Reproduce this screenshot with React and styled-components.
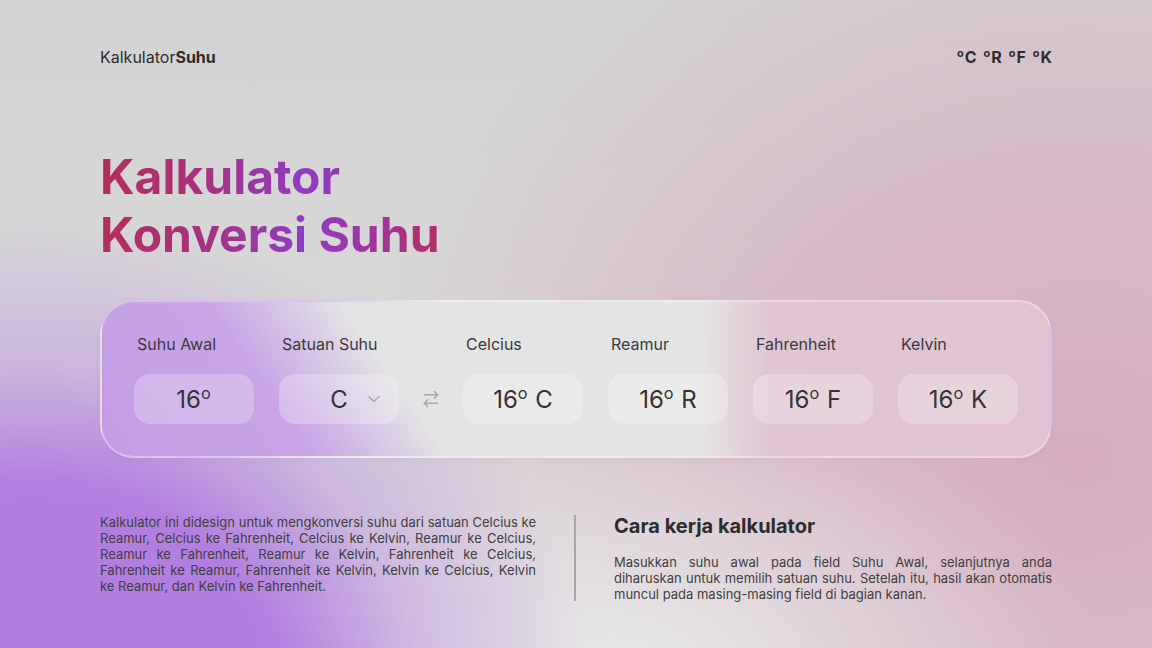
import React from "react";
import styled, { createGlobalStyle } from "styled-components";
import { ChevronDown, ArrowRightLeft } from "lucide-react";

const GlobalStyle = createGlobalStyle`
  * { box-sizing: border-box; }
  html, body {
    margin: 0;
    padding: 0;
    font-family: Inter, "Noto Sans", sans-serif;
    color: #333;
  }
`;

const units = ["C", "R", "F", "K"];

const results = [
  { label: "Celcius", unit: "C" },
  { label: "Reamur", unit: "R" },
  { label: "Fahrenheit", unit: "F" },
  { label: "Kelvin", unit: "K" },
];

const App = () => {
  return (
    <Page>
      <GlobalStyle />
      <Header>
        <Logo>
          Kalkulator<b>Suhu</b>
        </Logo>
        <UnitNav>
          {units.map((u) => (
            <span key={u}>
              <Deg>o</Deg>
              {u}
            </span>
          ))}
        </UnitNav>
      </Header>

      <Title>
        Kalkulator
        <br />
        Konversi Suhu
      </Title>

      <Card>
        <Column>
          <Label>Suhu Awal</Label>
          <Field>
            <span>
              16<Deg>o</Deg>
            </span>
          </Field>
        </Column>
        <Column>
          <Label>Satuan Suhu</Label>
          <Field>
            <span>C</span>
            <SelectIcon>
              <ChevronDown size={20} strokeWidth={1.8} />
            </SelectIcon>
          </Field>
        </Column>
        <SwapSlot>
          <ArrowRightLeft size={20} strokeWidth={1.8} />
        </SwapSlot>
        {results.map((r) => (
          <Column key={r.label}>
            <Label>{r.label}</Label>
            <Field>
              <span>
                16<Deg>o</Deg> {r.unit}
              </span>
            </Field>
          </Column>
        ))}
      </Card>

      <InfoSection>
        <InfoText>
          Kalkulator ini didesign untuk mengkonversi suhu dari satuan Celcius ke
          Reamur, Celcius ke Fahrenheit, Celcius ke Kelvin, Reamur ke Celcius,
          Reamur ke Fahrenheit, Reamur ke Kelvin, Fahrenheit ke Celcius,
          Fahrenheit ke Reamur, Fahrenheit ke Kelvin, Kelvin ke Celcius, Kelvin
          ke Reamur, dan Kelvin ke Fahrenheit.
        </InfoText>
        <Divider />
        <div>
          <InfoTitle>Cara kerja kalkulator</InfoTitle>
          <InfoText>
            Masukkan suhu awal pada field Suhu Awal, selanjutnya anda
            diharuskan untuk memilih satuan suhu. Setelah itu, hasil akan
            otomatis muncul pada masing-masing field di bagian kanan.
          </InfoText>
        </div>
      </InfoSection>
    </Page>
  );
};

export default App;

const Page = styled.div`
  width: 1152px;
  height: 648px;
  overflow: hidden;
  padding: 47px 100px 0;
  background:
    radial-gradient(ellipse 560px 480px at 30px 700px, #b07be0 0%, #b27fe0 45%, rgba(190, 150, 225, 0.5) 70%, rgba(200, 180, 225, 0) 100%),
    radial-gradient(ellipse 480px 260px at 620px 660px, #e7e7e7 0%, rgba(231, 231, 231, 0) 100%),
    radial-gradient(ellipse 720px 600px at 1080px 460px, #d6adc1 0%, rgba(214, 173, 193, 0.7) 45%, rgba(214, 173, 193, 0) 100%),
    linear-gradient(180deg, #d3d3d3 0%, #dcdcdc 100%);
`;

const Header = styled.header`
  display: flex;
  justify-content: space-between;
  align-items: center;
  height: 20px;
`;

const Logo = styled.div`
  font-size: 16px;
  line-height: 20px;
  color: #2e2e2e;

  b {
    font-weight: 700;
  }
`;

const UnitNav = styled.nav`
  display: flex;
  gap: 7px;
  font-size: 16px;
  font-weight: 700;
  line-height: 20px;
  color: #2e2e2e;
`;

const Deg = styled.span`
  font-size: 0.68em;
  line-height: 0;
  vertical-align: 0.52em;
  margin-right: 1px;
`;

const Title = styled.h1`
  margin: 81px 0 0;
  display: inline-block;
  font-size: 48px;
  line-height: 58px;
  font-weight: 700;
  background: linear-gradient(90deg, #b52d5c 0%, #a6327e 30%, #8f3cc4 60%, #a2349a 82%, #b42f64 100%);
  -webkit-background-clip: text;
  background-clip: text;
  color: transparent;
`;

const Card = styled.section`
  margin-top: 36px;
  height: 158px;
  padding: 32px 32px 0;
  display: flex;
  gap: 25px;
  border-radius: 34px;
  border: 2px solid rgba(255, 255, 255, 0.35);
  box-shadow: 0 2px 10px rgba(0, 0, 0, 0.03);
  background:
    linear-gradient(55deg, #c29ce4 0%, #c7a5e6 20%, rgba(229, 229, 229, 0) 33%),
    linear-gradient(92deg, rgba(228, 228, 228, 0) 63%, #e0c6d3 70%, #dfc3d1 100%),
    #e4e4e4;
`;

const Column = styled.div`
  display: flex;
  flex-direction: column;
  gap: 20px;
  width: 120px;
  flex-shrink: 0;
`;

const Label = styled.div`
  padding-left: 3px;
  font-size: 16px;
  line-height: 20px;
  color: #3a3a3a;
  white-space: nowrap;
`;

const Field = styled.div`
  position: relative;
  height: 50px;
  border-radius: 16px;
  background: rgba(255, 255, 255, 0.25);
  display: flex;
  align-items: center;
  justify-content: center;
  font-size: 24px;
  color: #333;
`;

const SelectIcon = styled.span`
  position: absolute;
  right: 15px;
  top: 50%;
  transform: translateY(-50%);
  display: flex;
  color: #ababab;
`;

const SwapSlot = styled.div`
  width: 14px;
  height: 50px;
  margin-top: 40px;
  display: flex;
  align-items: center;
  justify-content: center;
  color: #a9a9a9;

  svg {
    flex-shrink: 0;
  }
`;

const InfoSection = styled.section`
  margin-top: 56px;
  display: grid;
  grid-template-columns: 436px 2px 438px;
  justify-content: space-between;
`;

const Divider = styled.div`
  width: 2px;
  height: 86px;
  margin-top: 1px;
  background: #a9a6ab;
`;

const InfoTitle = styled.h3`
  margin: 0 0 16px;
  font-size: 20px;
  line-height: 24px;
  font-weight: 700;
  color: #2c2c2c;
`;

const InfoText = styled.p`
  margin: 0;
  font-size: 13px;
  line-height: 16px;
  text-align: justify;
  color: #3f3f3f;
`;
